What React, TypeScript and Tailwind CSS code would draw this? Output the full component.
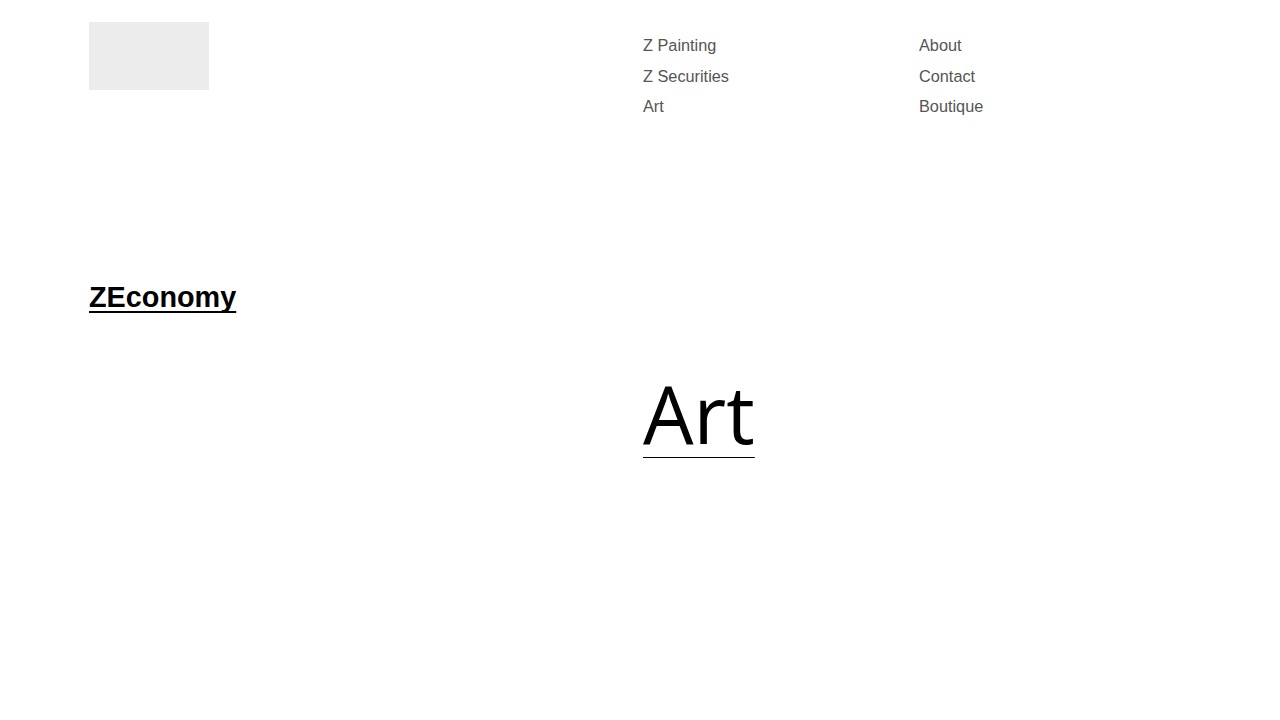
export default function App() {
  const col1 = ["Z Painting", "Z Securities", "Art"];
  const col2 = ["About", "Contact", "Boutique"];

  return (
    <div className="min-h-[720px] bg-white px-[89px] pt-[22px] font-['Liberation_Sans',Arial,sans-serif] text-black">
      <header className="flex items-start">
        <div className="h-[68px] w-[120px] shrink-0 bg-[#ececec]" />
        <nav className="ml-[434px] mt-[8px] flex">
          <ul className="w-[276px] shrink-0 text-[16.3px] leading-[30.5px] text-[#555555]">
            {col1.map((item) => (
              <li key={item}>
                <a href="#">{item}</a>
              </li>
            ))}
          </ul>
          <ul className="text-[16.3px] leading-[30.5px] text-[#555555]">
            {col2.map((item) => (
              <li key={item}>
                <a href="#">{item}</a>
              </li>
            ))}
          </ul>
        </nav>
      </header>

      <main className="mt-[158px]">
        <h2 className="text-[28.8px] font-bold leading-[1.2]">
          <a href="#" className="underline decoration-2 underline-offset-[4px] [text-decoration-skip-ink:none]">
            ZEconomy
          </a>
        </h2>
        <div className="mt-[59px] pl-[554px]">
          <h1 className="font-['Open_Sans',sans-serif] text-[80px] leading-none">
            <a href="#" className="underline decoration-1 underline-offset-[13px]">
              Art
            </a>
          </h1>
        </div>
      </main>
    </div>
  );
}
